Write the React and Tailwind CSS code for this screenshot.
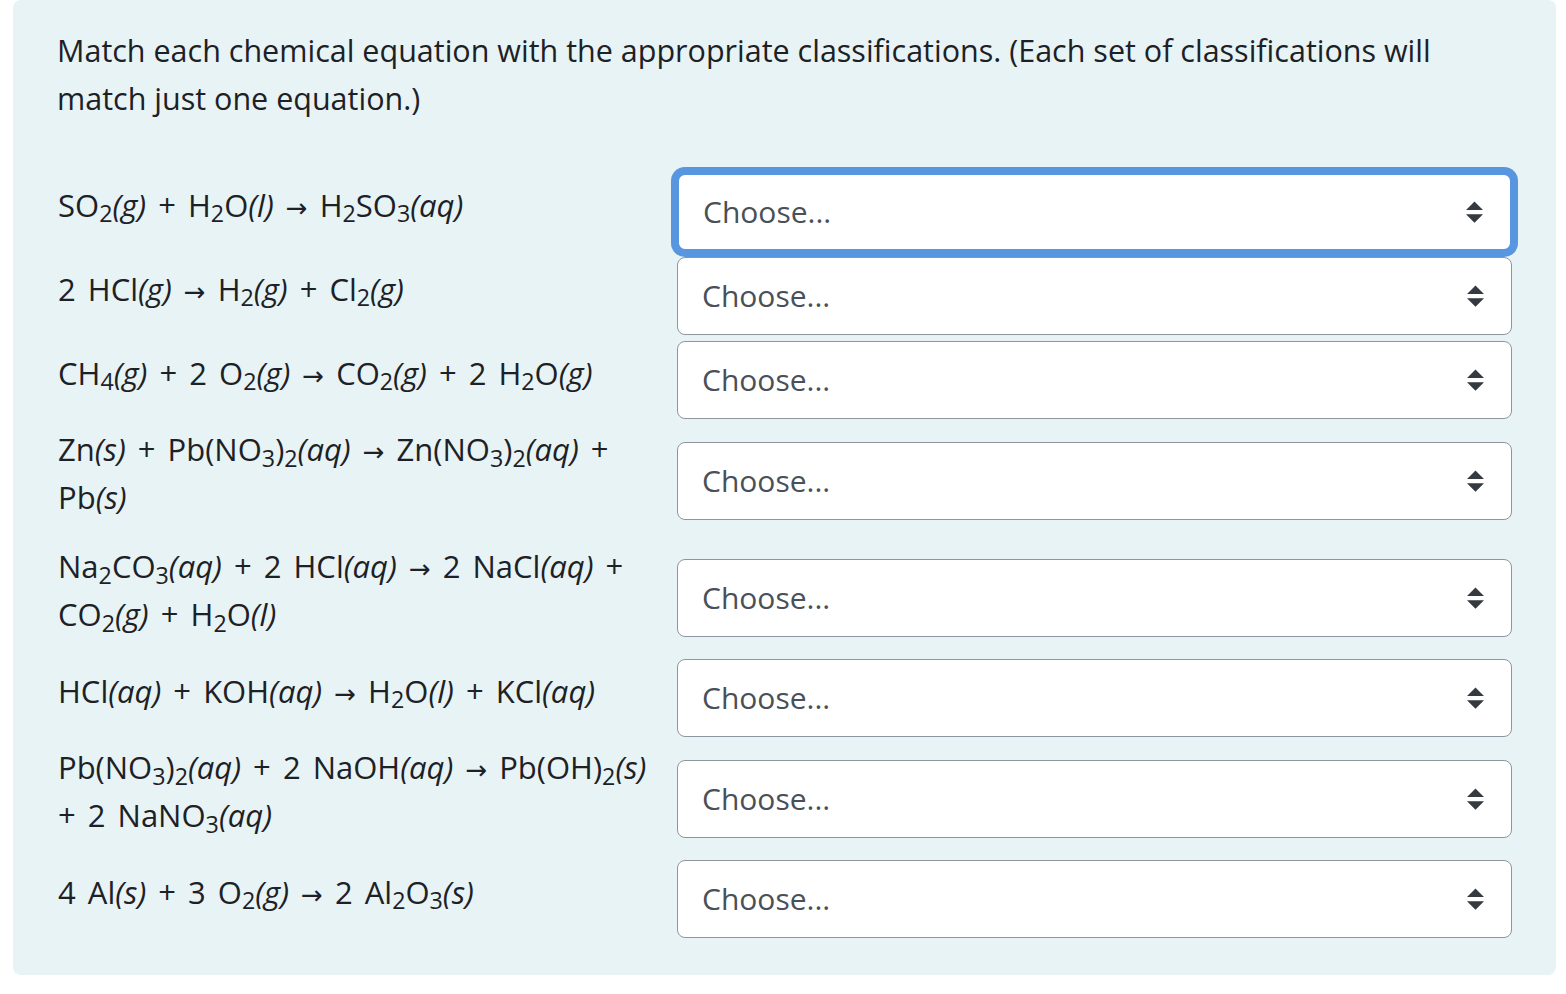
import React from "react";

const F = { fontFamily: '"Open Sans", "Noto Sans", sans-serif' };

function Sel({ focused }) {
  return (
    <div
      className={
        "flex-1 h-[78px] bg-white rounded-[8px] flex items-center justify-between pl-[24px] pr-[27px] " +
        (focused
          ? "border-2 border-[#5896e0] shadow-[0_0_0_6px_#5896e0]"
          : "border-[1.5px] border-[#8f959e]")
      }
    >
      <span className="text-[30px] text-[#495057] leading-none">Choose...</span>
      <svg width="17" height="22" viewBox="0 0 4 5" className="shrink-0">
        <path d="M2 0L0 2h4zm0 5L0 3h4z" fill="#343a40" />
      </svg>
    </div>
  );
}

const A = () => (
  <span className="text-[26px] leading-none" style={{ fontFamily: '"DejaVu Sans", sans-serif' }}>→</span>
);

const eqs = [
  <>SO<sub>2</sub><i>(g)</i> + H<sub>2</sub>O<i>(l)</i> <A /> H<sub>2</sub>SO<sub>3</sub><i>(aq)</i></>,
  <>2 HCl<i>(g)</i> <A /> H<sub>2</sub><i>(g)</i> + Cl<sub>2</sub><i>(g)</i></>,
  <>CH<sub>4</sub><i>(g)</i> + 2 O<sub>2</sub><i>(g)</i> <A /> CO<sub>2</sub><i>(g)</i> + 2 H<sub>2</sub>O<i>(g)</i></>,
  <>Zn<i>(s)</i> + Pb(NO<sub>3</sub>)<sub>2</sub><i>(aq)</i> <A /> Zn(NO<sub>3</sub>)<sub>2</sub><i>(aq)</i> +<br />Pb<i>(s)</i></>,
  <>Na<sub>2</sub>CO<sub>3</sub><i>(aq)</i> + 2 HCl<i>(aq)</i> <A /> 2 NaCl<i>(aq)</i> +<br />CO<sub>2</sub><i>(g)</i> + H<sub>2</sub>O<i>(l)</i></>,
  <>HCl<i>(aq)</i> + KOH<i>(aq)</i> <A /> H<sub>2</sub>O<i>(l)</i> + KCl<i>(aq)</i></>,
  <>Pb(NO<sub>3</sub>)<sub>2</sub><i>(aq)</i> + 2 NaOH<i>(aq)</i> <A /> Pb(OH)<sub>2</sub><i>(s)</i><br />+ 2 NaNO<sub>3</sub><i>(aq)</i></>,
  <>4 Al<i>(s)</i> + 3 O<sub>2</sub><i>(g)</i> <A /> 2 Al<sub>2</sub>O<sub>3</sub><i>(s)</i></>,
];

export default function App() {
  return (
    <div className="w-[1566px] h-[994px] bg-white" style={F}>
      <div className="ml-[13px] w-[1543px] h-[975px] bg-[#e7f3f5] rounded-[8px] px-[44px] pt-[26px] text-[#1d2125]">
        <p className="text-[30.5px] leading-[48px] whitespace-nowrap mb-[51px]">
          Match each chemical equation with the appropriate classifications. (Each set of classifications will
          <br />
          match just one equation.)
        </p>
        <div className="flex flex-col gap-[6px]">
          {eqs.map((e, i) => (
            <div key={i} className="flex items-center">
              <div className="w-[620px] shrink-0 pl-[1px] pb-[15px] text-[31px] leading-[48px] whitespace-nowrap [word-spacing:4px]">
                {e}
              </div>
              <Sel focused={i === 0} />
            </div>
          ))}
        </div>
      </div>
    </div>
  );
}
